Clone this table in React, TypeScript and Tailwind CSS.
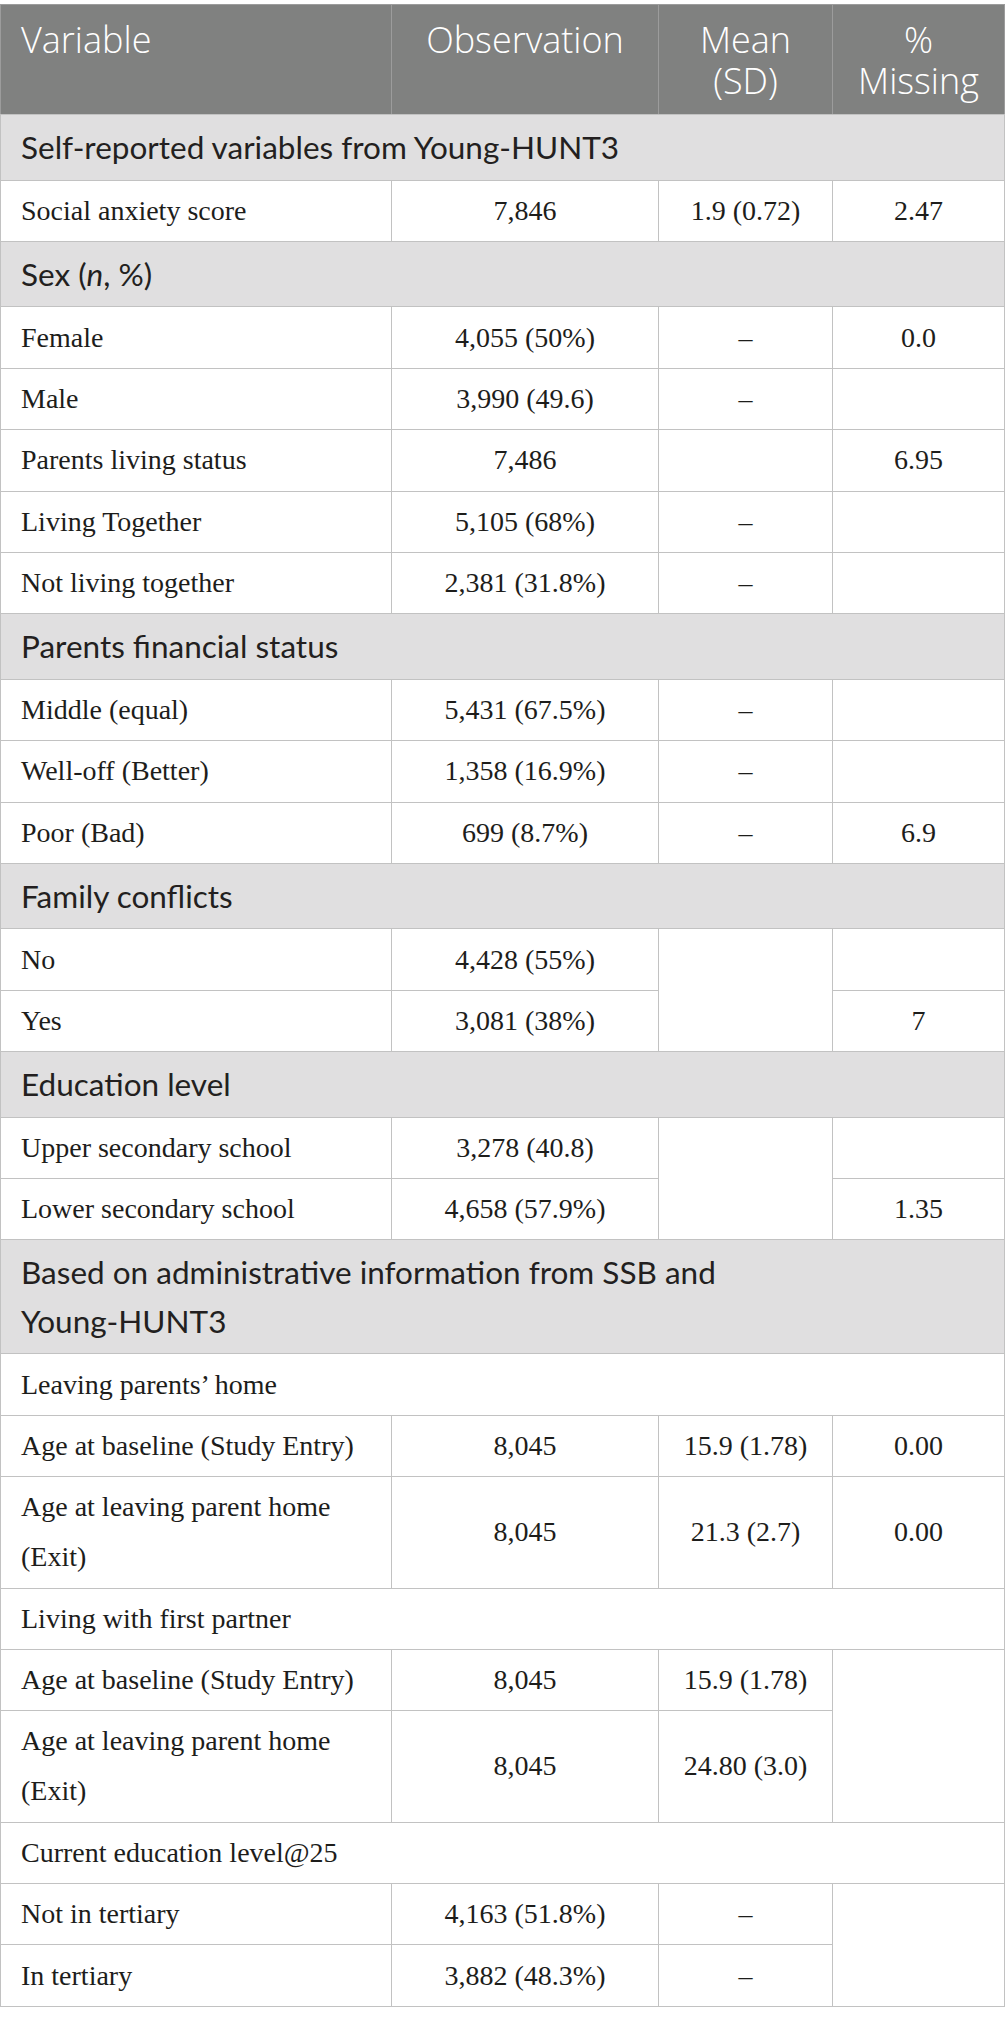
import React from 'react';

const sans = "font-['Lato','Open_Sans',sans-serif]";
const headSans = "font-['Open_Sans','Lato',sans-serif]";
const serif = "font-['Liberation_Serif','Times_New_Roman',serif]";

const th = `border border-[#9c9c9c] border-b-[#c2c2c2] align-top pt-[14px] pb-[13px] leading-[41px] text-[36px] font-light text-white ${headSans}`;
const td = `border border-[#c2c2c2] px-[20px] py-[5.2px] leading-[50px] text-[28px] text-[#1d1d1b] align-middle ${serif}`;

const Section = ({ children }: { children: React.ReactNode }) => (
  <tr className="bg-[#e0dfe0]">
    <td colSpan={4} className={`border border-[#c2c2c2] px-[20px] py-[8px] leading-[48.5px] text-[31.5px] text-[#231f20] ${sans}`}>
      {children}
    </td>
  </tr>
);

const Sub = ({ children }: { children: React.ReactNode }) => (
  <tr className="bg-white">
    <td colSpan={4} className={td}>
      {children}
    </td>
  </tr>
);

type Cell = string | null;

const Row = ({ label, obs, mean, miss }: { label: React.ReactNode; obs: string; mean?: Cell; miss?: Cell }) => (
  <tr className="bg-white">
    <td className={td}>{label}</td>
    <td className={`${td} text-center`}>{obs}</td>
    {mean !== null && <td className={`${td} text-center`}>{mean}</td>}
    {miss !== null && <td className={`${td} text-center`}>{miss}</td>}
  </tr>
);

export default function App() {
  return (
    <div className="bg-white pt-[4px] w-[1005px] min-h-[2024px]">
      <table className="w-[1004px] table-fixed border-collapse">
        <colgroup>
          <col className="w-[391px]" />
          <col className="w-[267px]" />
          <col className="w-[174px]" />
          <col className="w-[172px]" />
        </colgroup>
        <thead>
          <tr className="bg-[#808180]">
            <th className={`${th} text-left px-[20px]`}>Variable</th>
            <th className={`${th} text-center`}>Observation</th>
            <th className={`${th} text-center`}>
              Mean
              <br />
              (SD)
            </th>
            <th className={`${th} text-center`}>
              %
              <br />
              Missing
            </th>
          </tr>
        </thead>
        <tbody>
          <Section>Self-reported variables from Young-HUNT3</Section>
          <Row label="Social anxiety score" obs="7,846" mean="1.9 (0.72)" miss="2.47" />
          <Section>
            Sex (<i>n</i>, %)
          </Section>
          <Row label="Female" obs="4,055 (50%)" mean="–" miss="0.0" />
          <Row label="Male" obs="3,990 (49.6)" mean="–" miss="" />
          <Row label="Parents living status" obs="7,486" mean="" miss="6.95" />
          <Row label="Living Together" obs="5,105 (68%)" mean="–" miss="" />
          <Row label="Not living together" obs="2,381 (31.8%)" mean="–" miss="" />
          <Section>Parents financial status</Section>
          <Row label="Middle (equal)" obs="5,431 (67.5%)" mean="–" miss="" />
          <Row label="Well-off (Better)" obs="1,358 (16.9%)" mean="–" miss="" />
          <Row label="Poor (Bad)" obs="699 (8.7%)" mean="–" miss="6.9" />
          <Section>Family conflicts</Section>
          <tr className="bg-white">
            <td className={td}>No</td>
            <td className={`${td} text-center`}>4,428 (55%)</td>
            <td rowSpan={2} className={td}></td>
            <td className={`${td} text-center`}></td>
          </tr>
          <Row label="Yes" obs="3,081 (38%)" mean={null} miss="7" />
          <Section>Education level</Section>
          <tr className="bg-white">
            <td className={td}>Upper secondary school</td>
            <td className={`${td} text-center`}>3,278 (40.8)</td>
            <td rowSpan={2} className={td}></td>
            <td className={`${td} text-center`}></td>
          </tr>
          <Row label="Lower secondary school" obs="4,658 (57.9%)" mean={null} miss="1.35" />
          <Section>
            Based on administrative information from SSB and
            <br />
            Young-HUNT3
          </Section>
          <Sub>Leaving parents’ home</Sub>
          <Row label="Age at baseline (Study Entry)" obs="8,045" mean="15.9 (1.78)" miss="0.00" />
          <Row label="Age at leaving parent home (Exit)" obs="8,045" mean="21.3 (2.7)" miss="0.00" />
          <Sub>Living with first partner</Sub>
          <tr className="bg-white">
            <td className={td}>Age at baseline (Study Entry)</td>
            <td className={`${td} text-center`}>8,045</td>
            <td className={`${td} text-center`}>15.9 (1.78)</td>
            <td rowSpan={2} className={td}></td>
          </tr>
          <Row label="Age at leaving parent home (Exit)" obs="8,045" mean="24.80 (3.0)" miss={null} />
          <Sub>Current education level@25</Sub>
          <tr className="bg-white">
            <td className={td}>Not in tertiary</td>
            <td className={`${td} text-center`}>4,163 (51.8%)</td>
            <td className={`${td} text-center`}>–</td>
            <td rowSpan={2} className={td}></td>
          </tr>
          <Row label="In tertiary" obs="3,882 (48.3%)" mean="–" miss={null} />
        </tbody>
      </table>
    </div>
  );
}
